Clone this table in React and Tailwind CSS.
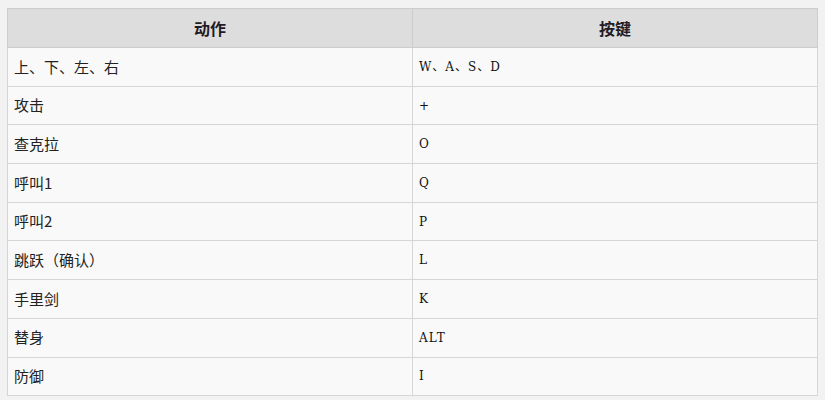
const rows = [
  ['上、下、左、右', 'W、A、S、D'],
  ['攻击', '+'],
  ['查克拉', 'O'],
  ['呼叫1', 'Q'],
  ['呼叫2', 'P'],
  ['跳跃（确认）', 'L'],
  ['手里剑', 'K'],
  ['替身', 'ALT'],
  ['防御', 'I'],
]

export default function App() {
  return (
    <div className="w-[825px] h-[400px] bg-[#f2f2f2] pt-[8px] pl-[7px] overflow-hidden">
      <table className="w-[811px] border-collapse table-fixed border border-[#c8c8c8] bg-[#f9f9f9]">
        <thead>
          <tr className="h-[39px] bg-[#dddddd]">
            {['动作', '按键'].map(h => (
              <th
                key={h}
                className="border border-[#cccccc] text-center text-[16px] font-bold text-[#221a24] font-['Noto_Sans_CJK_SC',sans-serif]"
              >
                {h}
              </th>
            ))}
          </tr>
        </thead>
        <tbody>
          {rows.map(([action, key]) => (
            <tr key={action} className="h-[38.7px]">
              <td className="border border-[#d6d6d6] pl-[6px] text-[15px] text-[#222] font-['Noto_Sans_CJK_SC',sans-serif]">
                {action}
              </td>
              <td className="border border-[#d6d6d6] pl-[6px] text-[12px] tracking-[1px] text-[#111] font-['DejaVu_Serif','Noto_Sans_CJK_SC',serif]">
                {key}
              </td>
            </tr>
          ))}
        </tbody>
      </table>
    </div>
  )
}
